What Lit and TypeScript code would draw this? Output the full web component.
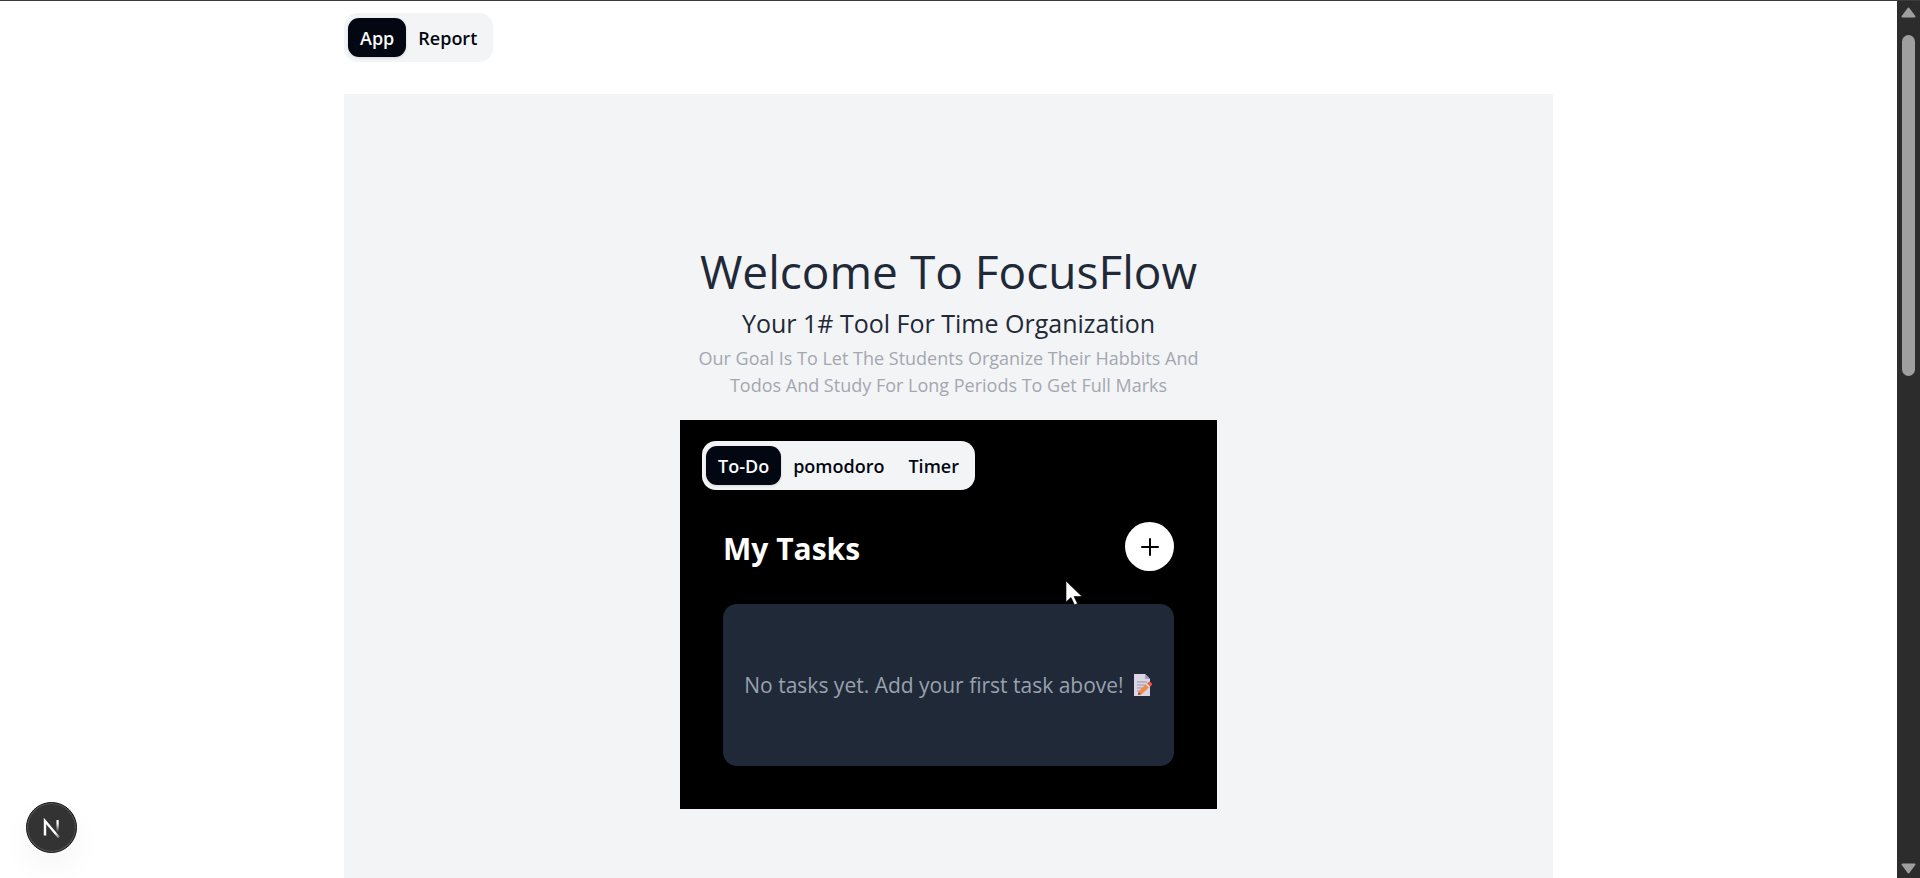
import { LitElement, html, css } from "lit";
import { customElement, property, state } from "lit/decorators.js";

@customElement("tab-bar")
class TabBar extends LitElement {
  @property({ attribute: false }) tabs: string[] = [];
  @property() label = "";
  @state() private active = 0;

  static styles = css`
    :host { display: block; }
    .list {
      display: inline-flex;
      padding: 5px 4px;
      border-radius: 14px;
      background: #f3f4f6;
      vertical-align: top;
    }
    .tab {
      border: 0;
      margin: 0;
      padding: 7px 12px 5px;
      border-radius: 11px;
      background: transparent;
      color: #030712;
      font: 600 18px/27px "Open Sans", "Noto Sans", sans-serif;
      cursor: pointer;
    }
    .tab.on {
      background: #030712;
      color: #f9fafb;
      box-shadow: 0 1px 3px rgba(0, 0, 0, 0.12);
    }
  `;

  render() {
    return html`<div class="list" role="tablist" aria-label=${this.label}>
      ${this.tabs.map(
        (t, i) => html`<button
          class="tab ${i === this.active ? "on" : ""}"
          role="tab"
          aria-selected=${i === this.active}
          @click=${() => (this.active = i)}
        >${t}</button>`
      )}
    </div>`;
  }
}

@customElement("app-root")
class AppRoot extends LitElement {
  static styles = css`
    :host {
      display: flex;
      height: 100vh;
      box-sizing: border-box;
      overflow: hidden;
      position: relative;
      border-top: 1px solid #3c3c3c;
      background: #fff;
      font-family: "Open Sans", "Noto Sans", sans-serif;
    }
    .page {
      flex: 1;
      min-width: 0;
      display: flex;
      justify-content: center;
    }
    .container {
      width: 100%;
      max-width: 1209px;
      padding-top: 12px;
      display: flex;
      flex-direction: column;
      gap: 32px;
    }
    .panel {
      flex: 1;
      background: #f3f4f6;
      display: flex;
      flex-direction: column;
      align-items: center;
      padding-top: 146px;
    }
    .hero { text-align: center; max-width: 537px; margin-bottom: 21px; }
    h1, h2, h3, p { margin: 0; font-weight: 400; }
    h1 { font-size: 46px; line-height: 62px; color: #1f2937; }
    .sub { font-size: 25px; line-height: 43px; color: #1f2937; }
    .goal {
      font-size: 18px;
      line-height: 27px;
      color: #a3a7b0;
    }
    .goal span { display: block; }
    .card {
      width: 537px;
      max-width: 100%;
      box-sizing: border-box;
      background: #000;
      padding: 21px 22px 43px;
    }
    .tasks { padding: 32px 21px 0; }
    .head {
      display: flex;
      align-items: center;
      justify-content: space-between;
      margin-bottom: 33px;
    }
    h3 { font-size: 30px; line-height: 45px; padding-top: 4px; font-weight: 700; color: #fff; }
    .add {
      width: 49px;
      height: 49px;
      padding: 0;
      border: 0;
      border-radius: 50%;
      background: #fff;
      display: grid;
      place-items: center;
      cursor: pointer;
    }
    svg { display: block; }
    .empty {
      display: flex;
      align-items: center;
      justify-content: center;
      gap: 10px;
      padding: 65px 0;
      border-radius: 14px;
      background: #1f2937;
      color: #99a1af;
      font-size: 21px;
      line-height: 32px;
      white-space: nowrap;
    }
    .bar {
      width: 23px;
      box-sizing: border-box;
      padding: 6px 4px 4px;
      background: #2c2c2c;
      display: flex;
      flex-direction: column;
      align-items: center;
    }
    .track { flex: 1; padding: 17px 0; }
    .thumb { width: 13px; height: 42%; border-radius: 7px; background: #9f9f9f; }
    .dev {
      position: absolute;
      left: 26px;
      bottom: 25px;
      width: 51px;
      height: 51px;
      padding: 0;
      border: 1px solid #111;
      border-radius: 50%;
      background: #333;
      box-shadow: inset 0 0 0 1px #5a5a5a, 0 14px 32px -2px rgba(0, 0, 0, 0.05);
      display: grid;
      place-items: center;
    }
    .cursor { position: absolute; left: 1065px; top: 579px; pointer-events: none; }
  `;

  render() {
    return html`
      <main class="page">
        <div class="container">
          <tab-bar label="Views" .tabs=${["App", "Report"]}></tab-bar>
          <section class="panel">
            <header class="hero">
              <h1>Welcome To FocusFlow</h1>
              <h2 class="sub">Your 1# Tool For Time Organization</h2>
              <p class="goal">
                <span>Our Goal Is To Let The Students Organize Their Habbits And</span>
                <span>Todos And Study For Long Periods To Get Full Marks</span>
              </p>
            </header>
            <div class="card">
              <tab-bar label="Tools" .tabs=${["To-Do", "pomodoro", "Timer"]}></tab-bar>
              <div class="tasks">
                <div class="head">
                  <h3>My Tasks</h3>
                  <button class="add" aria-label="Add task">
                    <svg width="20" height="20" viewBox="0 0 20 20" fill="none" stroke="#000" stroke-width="2" stroke-linecap="round"><path d="M10 2v16M2 10h16" /></svg>
                  </button>
                </div>
                <div class="empty">
                  <span>No tasks yet. Add your first task above!</span>
                  <svg width="19" height="24" viewBox="0 0 19 24" aria-hidden="true">
                    <path d="M0 1h11l5 5v17H0z" fill="#dcd5e6" />
                    <path d="M11 1v5h5z" fill="#a99fba" />
                    <path d="M3 9h10M3 12h9M3 15h7M3 18h4" stroke="#998fa8" stroke-width="1" />
                    <path d="M4 22l1-4 7-7 3.500 3-7.500 7z" fill="#ef8c3f" />
                    <path d="M4 22l.8-3 2.200 2.200z" fill="#7d4533" />
                    <path d="M11.500 11.500l1.500-1.300 3.300 3-1.500 1.400z" fill="#d9d6e8" />
                    <path d="M13 10.200l1.600-1.200q1.300-.5 2.500.6t1 2.200l-1.800 1.600z" fill="#f5523c" />
                  </svg>
                </div>
              </div>
            </div>
          </section>
        </div>
      </main>
      <div class="bar" aria-hidden="true">
        <svg width="15" height="11" viewBox="0 0 15 11"><path d="M7.500 1.500L13.500 9.500H1.500z" fill="#9f9f9f" stroke="#9f9f9f" stroke-width="2" stroke-linejoin="round" /></svg>
        <div class="track"><div class="thumb"></div></div>
        <svg width="15" height="11" viewBox="0 0 15 11"><path d="M7.500 9.500L1.500 1.500H13.500z" fill="#9f9f9f" stroke="#9f9f9f" stroke-width="2" stroke-linejoin="round" /></svg>
      </div>
      <button class="dev" aria-label="Open developer tools">
        <svg width="20" height="20" viewBox="0 0 20 20" fill="none" stroke-width="2">
          <defs>
            <linearGradient id="v" x1="0" y1="0" x2="0" y2="1"><stop offset=".3" stop-color="#fff" /><stop offset="1" stop-color="#fff" stop-opacity="0" /></linearGradient>
            <linearGradient id="d" gradientUnits="userSpaceOnUse" x1="3" y1="2" x2="18" y2="20"><stop offset=".7" stop-color="#fff" /><stop offset="1" stop-color="#fff" stop-opacity=".2" /></linearGradient>
          </defs>
          <path d="M3 17.500V3L17 19.500" stroke="url(#d)" stroke-width="2.400" />
          <rect x="14.500" y="2" width="2.200" height="12" fill="url(#v)" />
        </svg>
      </button>
      <svg class="cursor" width="19" height="27" viewBox="0 0 19 27" aria-hidden="true">
        <path d="M1 1v21l5-4.500 3.500 7.500 3-1.500-3.500-7H17z" fill="#fff" stroke="#000" stroke-width=".6" />
      </svg>
    `;
  }
}
